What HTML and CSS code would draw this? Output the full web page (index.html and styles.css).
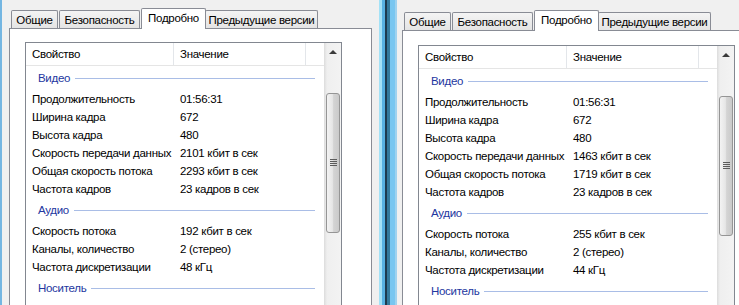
FILE: index.html
```html
<!DOCTYPE html>
<html lang="ru">
<head>
  <meta charset="UTF-8" />
  <title>Свойства</title>
  <link rel="stylesheet" href="styles.css">
</head>
<body>
  <div class="desk">
    <div class="edge"></div>

    <!-- Left window -->
    <div class="win">
      <div class="tabs">
        <div class="tab t1">Общие</div>
        <div class="tab t2">Безопасность</div>
        <div class="tab sel">Подробно</div>
        <div class="tab t4">Предыдущие версии</div>
      </div>
      <div class="panel">
        <div class="list">
          <div class="list-body">
            <div class="head">
              <div class="hcell c1">Свойство</div>
              <div class="hcell c2">Значение</div>
              <div class="hcell c3"></div>
            </div>
            <div class="group"><span>Видео</span></div>
            <div class="row"><span>Продолжительность</span><span>01:56:31</span></div>
            <div class="row"><span>Ширина кадра</span><span>672</span></div>
            <div class="row"><span>Высота кадра</span><span>480</span></div>
            <div class="row"><span>Скорость передачи данных</span><span>2101 кбит в сек</span></div>
            <div class="row"><span>Общая скорость потока</span><span>2293 кбит в сек</span></div>
            <div class="row"><span>Частота кадров</span><span>23 кадров в сек</span></div>
            <div class="group"><span>Аудио</span></div>
            <div class="row"><span>Скорость потока</span><span>192 кбит в сек</span></div>
            <div class="row"><span>Каналы, количество</span><span>2 (стерео)</span></div>
            <div class="row"><span>Частота дискретизации</span><span>48 кГц</span></div>
            <div class="group"><span>Носитель</span></div>
            <div class="row"><span>Участвующие исполнители</span><span>VIRUS - [Antologia]</span></div>
          </div>
          <div class="scroll">
            <div class="arrow"></div>
            <div class="thumb">
              <div class="grip"><i></i><i></i><i></i><i></i></div>
            </div>
          </div>
        </div>
      </div>
    </div>

    <div class="seam"></div>

    <!-- Right window -->
    <div class="win win-right">
      <div class="tabs">
        <div class="tab t1">Общие</div>
        <div class="tab t2">Безопасность</div>
        <div class="tab sel">Подробно</div>
        <div class="tab t4">Предыдущие версии</div>
      </div>
      <div class="panel">
        <div class="list">
          <div class="list-body">
            <div class="head">
              <div class="hcell c1">Свойство</div>
              <div class="hcell c2">Значение</div>
              <div class="hcell c3"></div>
            </div>
            <div class="group"><span>Видео</span></div>
            <div class="row"><span>Продолжительность</span><span>01:56:31</span></div>
            <div class="row"><span>Ширина кадра</span><span>672</span></div>
            <div class="row"><span>Высота кадра</span><span>480</span></div>
            <div class="row"><span>Скорость передачи данных</span><span>1463 кбит в сек</span></div>
            <div class="row"><span>Общая скорость потока</span><span>1719 кбит в сек</span></div>
            <div class="row"><span>Частота кадров</span><span>23 кадров в сек</span></div>
            <div class="group"><span>Аудио</span></div>
            <div class="row"><span>Скорость потока</span><span>255 кбит в сек</span></div>
            <div class="row"><span>Каналы, количество</span><span>2 (стерео)</span></div>
            <div class="row"><span>Частота дискретизации</span><span>44 кГц</span></div>
            <div class="group"><span>Носитель</span></div>
          </div>
          <div class="scroll">
            <div class="arrow"></div>
            <div class="thumb">
              <div class="grip"><i></i><i></i><i></i><i></i></div>
            </div>
          </div>
        </div>
      </div>
    </div>
  </div>
</body>
</html>
```

FILE: styles.css
```css
body {
  margin: 0;
  width: 739px;
  height: 305px;
  overflow: hidden;
  background: #f0f0f0;
  font-family: "Liberation Sans", Arial, sans-serif;
  font-size: 11.5px;
  letter-spacing: -0.3px;
  color: #000;
}
.desk {
  display: flex;
  height: 305px;
}
.edge {
  flex: none;
  width: 2px;
  background: #74b6e2;
}
.seam {
  flex: none;
  width: 18px;
  background: linear-gradient(to right,
    #a4e2f7 0 3px, #58b2e2 3px 6px, #1d3b4f 6px 8px,
    #337a9c 8px 11px, #78c6f0 11px 16px, #9fd2ef 16px 18px);
}
.win {
  flex: none;
  width: 377px;
  box-sizing: border-box;
  padding: 8px 0 0 7px;
  overflow: hidden;
}
.win-right {
  flex: 1;
  width: auto;
  padding: 10px 0 0 5px;
}

/* Tabs */
.tabs {
  display: flex;
  align-items: flex-end;
  height: 20px;
  padding-left: 2px;
}
.tab {
  flex: none;
  height: 18px;
  box-sizing: border-box;
  border: 1px solid #898c95;
  border-bottom: none;
  border-radius: 2px 2px 0 0;
  background: linear-gradient(#f4f4f4, #e4e4e4);
  text-align: center;
  line-height: 18px;
  white-space: nowrap;
}
.t1 { width: 47px; margin-right: 1px; }
.t2 { width: 81px; margin-right: 1px; }
.t4 { width: 113px; margin-left: -1px; }
.sel {
  position: relative;
  z-index: 1;
  width: 65px;
  height: 21px;
  margin-bottom: -1px;
  background: #fff;
}

/* Tab panel */
.panel {
  width: 363px;
  height: 400px;
  box-sizing: border-box;
  border: 1px solid #898c95;
  background: #fff;
  padding: 13px 0 0 15px;
}
.win-right .panel {
  padding-top: 14px;
}

/* List view */
.list {
  display: flex;
  width: 317px;
  height: 380px;
  box-sizing: border-box;
  border: 1px solid #828790;
}
.list-body {
  flex: 1;
  min-width: 0;
}
.head {
  display: flex;
  height: 23px;
  box-sizing: border-box;
  border-bottom: 1px solid #e5e5e5;
}
.hcell {
  flex: none;
  box-sizing: border-box;
  padding-left: 6px;
  line-height: 22px;
  border-right: 1px solid #e3e6ea;
}
.c1 { width: 148px; }
.c2 { width: 132px; }
.c3 { flex: 1; border-right: none; }

.group {
  display: flex;
  align-items: center;
  height: 24px;
  padding: 0 9px 0 12px;
  color: #2336a0;
}
.group::after {
  content: "";
  flex: 1;
  height: 1px;
  margin-left: 5px;
  background: #a9bde6;
}
.row {
  display: grid;
  grid-template-columns: 148px 1fr;
  height: 18px;
  line-height: 18px;
  white-space: nowrap;
}
.row span {
  padding-left: 6px;
  overflow: hidden;
}

/* Scrollbar */
.scroll {
  flex: none;
  width: 17px;
  display: flex;
  flex-direction: column;
  background: linear-gradient(to right, #dcdcdc, #efefef 3px, #f3f3f3);
}
.arrow {
  width: 0;
  height: 0;
  margin: 7px auto 6px;
  border-left: 4px solid transparent;
  border-right: 4px solid transparent;
  border-bottom: 4px solid #3a3a3a;
}
.thumb {
  height: 140px;
  margin: 33px 1px 0 2px;
  box-sizing: border-box;
  border: 1px solid #959595;
  border-radius: 3px;
  background: linear-gradient(to right, #f3f3f3, #e6e6e6 45%, #d4d4d4 55%, #cacaca);
  display: flex;
  align-items: center;
  justify-content: center;
}
.grip i {
  display: block;
  width: 7px;
  height: 1px;
  margin-bottom: 1px;
  background: #5c5c5c;
}
```
